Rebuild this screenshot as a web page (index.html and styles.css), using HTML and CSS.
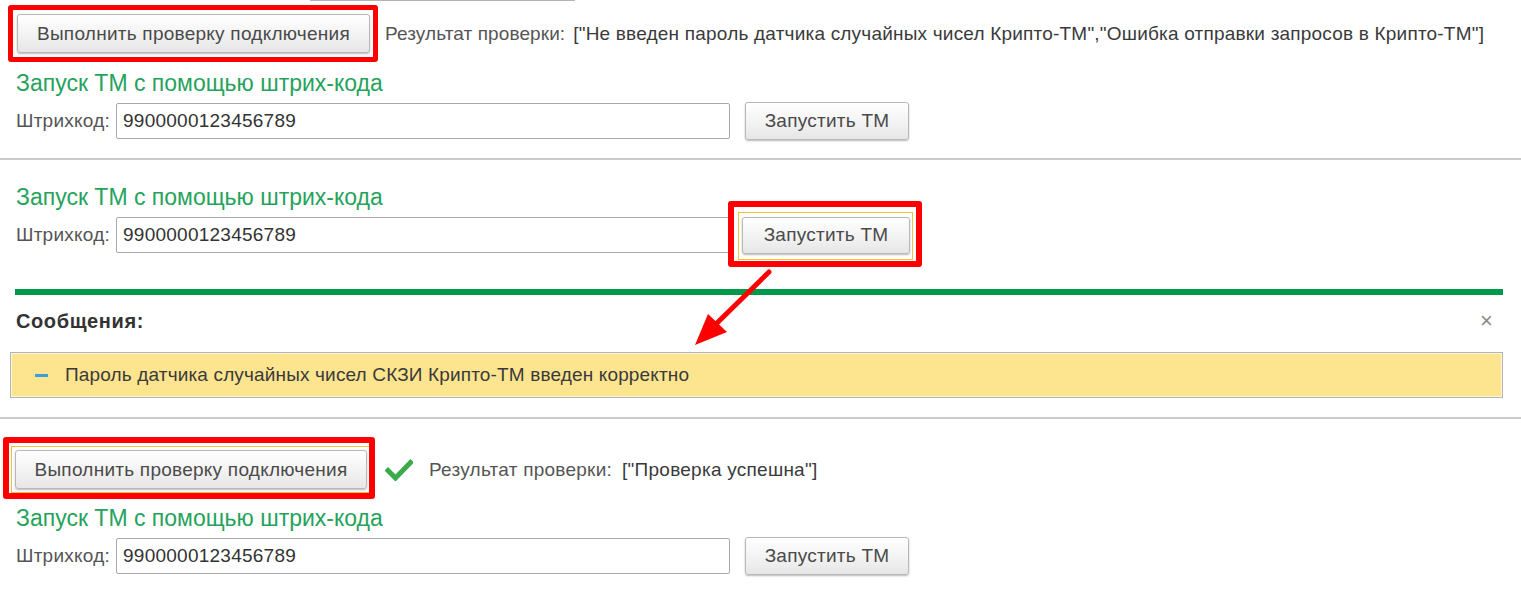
FILE: index.html
```html
<!DOCTYPE html>
<html lang="ru">
<head>
<meta charset="utf-8">
<title>Проверка подключения</title>
<link rel="stylesheet" href="styles.css">
</head>
<body>
<div class="page">
  <section class="panel panel-1">
    <div class="cut-field"></div>
    <div class="check-row check-row-1">
      <span class="hl hl-1"><button class="btn btn-check">Выполнить проверку подключения</button></span>
      <span class="res-label res-label-1">Результат проверки:</span>
      <span class="res-value res-value-1">["Не введен пароль датчика случайных чисел Крипто-ТМ","Ошибка отправки запросов в Крипто-ТМ"]</span>
    </div>
    <h2 class="title title-1">Запуск ТМ с помощью штрих-кода</h2>
    <div class="field-row">
      <span class="field-label">Штрихкод:</span>
      <div class="input">9900000123456789</div>
      <button class="btn btn-run">Запустить ТМ</button>
    </div>
  </section>

  <section class="panel panel-2">
    <h2 class="title title-2">Запуск ТМ с помощью штрих-кода</h2>
    <div class="field-row">
      <span class="field-label">Штрихкод:</span>
      <div class="input">9900000123456789</div>
      <span class="hl hl-2 focus"><button class="btn btn-run btn-run-2">Запустить ТМ</button></span>
    </div>
    <div class="messages">
      <div class="msg-bar"></div>
      <div class="msg-head">
        <span class="msg-title">Сообщения:</span>
        <span class="msg-close">×</span>
      </div>
      <div class="msg-box">
        <span class="msg-minus"></span>
        <span class="msg-text">Пароль датчика случайных чисел СКЗИ Крипто-ТМ введен корректно</span>
      </div>
    </div>
  </section>

  <section class="panel panel-3">
    <div class="check-row check-row-3">
      <span class="hl hl-3 focus"><button class="btn btn-check btn-check-3">Выполнить проверку подключения</button></span>
      <svg class="ok-icon" width="28" height="22" viewBox="0 0 28 22"><path d="M3 11.5 L10.5 19 L25.5 3.5" fill="none" stroke="#3aaa4a" stroke-width="5" stroke-linecap="square"/></svg>
      <span class="res-label res-label-3">Результат проверки:</span>
      <span class="res-value">["Проверка успешна"]</span>
    </div>
    <h2 class="title title-3">Запуск ТМ с помощью штрих-кода</h2>
    <div class="field-row">
      <span class="field-label">Штрихкод:</span>
      <div class="input">9900000123456789</div>
      <button class="btn btn-run">Запустить ТМ</button>
    </div>
  </section>

  <svg class="arrow" width="1521" height="614" viewBox="0 0 1521 614">
    <line x1="769" y1="272" x2="716" y2="324" stroke="#ff0000" stroke-width="5" stroke-linecap="round"/>
    <polygon points="695,345 708,314 727,332" fill="#ff0000"/>
  </svg>
</div>
</body>
</html>
```

FILE: styles.css
```css
html, body {
  margin: 0;
  padding: 0;
  background: #ffffff;
}

body {
  font-family: "Liberation Sans", Arial, sans-serif;
  font-size: 19px;
  letter-spacing: 0.25px;
  color: #4d4d4d;
}

.page {
  position: relative;
  width: 1521px;
  height: 614px;
  overflow: hidden;
}

.panel {
  border-bottom: 2px solid #cbcbcb;
}

.panel-1 {
  padding-bottom: 18px;
}

.panel-2 {
  padding-top: 24px;
  padding-bottom: 19px;
}

.panel-3 {
  border-bottom: none;
}

.cut-field {
  margin-left: 310px;
  width: 265px;
  height: 1px;
  background: #b3b3b3;
}

.check-row {
  display: flex;
  align-items: center;
  height: 39px;
}

.check-row-1 {
  margin-top: 13px;
  padding-left: 17px;
}

.check-row-3 {
  margin-top: 31px;
  padding-left: 15px;
}

.btn {
  font-family: inherit;
  font-size: 19px;
  letter-spacing: 0.25px;
  color: #4a4a4a;
  background: linear-gradient(#ffffff, #f1f1f1 60%, #e6e6e6);
  border: 1px solid #b8b8b8;
  border-radius: 3px;
  box-shadow: 0 1px 2px rgba(0, 0, 0, 0.28);
  padding: 0;
  margin: 0;
  box-sizing: border-box;
  cursor: pointer;
}

.btn-check {
  width: 353px;
  height: 39px;
}

.btn-check-3 {
  width: 352px;
}

.btn-run {
  margin-left: 15px;
  width: 164px;
  height: 38px;
}

.btn-run-2 {
  margin-left: 0;
  width: 168px;
  height: 37px;
}

.hl {
  position: relative;
  display: inline-flex;
}

.hl::after {
  content: "";
  position: absolute;
  border: 5px solid #ff0000;
  border-radius: 3px;
  pointer-events: none;
}

.focus::before {
  content: "";
  position: absolute;
  border: 1px solid #f3c23c;
  pointer-events: none;
}

.hl-1::after {
  top: -9px;
  left: -9px;
  right: -8px;
  bottom: -9px;
}

.hl-2 {
  margin-left: 12px;
}

.hl-2::before {
  top: -5px;
  left: -4px;
  right: -3px;
  bottom: -6px;
}

.hl-2::after {
  top: -16px;
  left: -14px;
  right: -12px;
  bottom: -13px;
  border-width: 6px;
}

.hl-3::before {
  top: -4px;
  left: -4px;
  right: -4px;
  bottom: -4px;
}

.hl-3::after {
  top: -13px;
  left: -12px;
  right: -8px;
  bottom: -10px;
  border-width: 6px;
}

.res-label {
  margin-left: 16px;
  color: #555555;
}

.res-label-1 {
  margin-left: 15px;
  letter-spacing: 0.1px;
}

.res-value {
  margin-left: 10px;
  color: #3a3a3a;
}

.res-value-1 {
  margin-left: 8px;
  letter-spacing: 0.2px;
}

.ok-icon {
  margin-left: 18px;
  flex: none;
}

.res-label-3 {
  margin-left: 16px;
}

.title {
  margin: 0 0 0 16px;
  font-size: 23px;
  line-height: 26px;
  letter-spacing: 0;
  font-weight: normal;
  color: #25a35c;
}

.title-1 {
  margin-top: 17px;
}

.title-3 {
  margin-top: 16px;
}

.field-row {
  display: flex;
  align-items: center;
  margin-top: 6px;
  padding-left: 16px;
  height: 38px;
}

.field-label {
  width: 100px;
  color: #555555;
}

.input {
  width: 614px;
  height: 36px;
  box-sizing: border-box;
  border: 1px solid #a9a9a9;
  border-radius: 2px;
  padding-left: 6px;
  line-height: 34px;
  color: #333333;
  background: #ffffff;
}

.messages {
  margin: 35px 18px 0 10px;
}

.msg-bar {
  height: 6px;
  margin-left: 5px;
  background: #00984a;
}

.msg-head {
  display: flex;
  align-items: center;
  justify-content: space-between;
  margin-top: 15px;
  height: 22px;
  padding-left: 6px;
  padding-right: 10px;
}

.msg-title {
  font-size: 20px;
  letter-spacing: 0.6px;
  font-weight: bold;
  color: #333333;
}

.msg-close {
  font-size: 22px;
  color: #8a8a8a;
}

.msg-box {
  margin-top: 20px;
  height: 46px;
  box-sizing: border-box;
  border: 1px solid #b3b3b3;
  box-shadow: inset 0 0 0 1px #fff7da;
  background: #fde48f;
  display: flex;
  align-items: center;
  padding-left: 24px;
}

.msg-minus {
  width: 13px;
  height: 3px;
  background: #3a9fdc;
  margin-right: 17px;
  flex: none;
}

.msg-text {
  color: #3a3a3a;
  letter-spacing: 0.15px;
}

.arrow {
  position: absolute;
  left: 0;
  top: 0;
  pointer-events: none;
}
```
